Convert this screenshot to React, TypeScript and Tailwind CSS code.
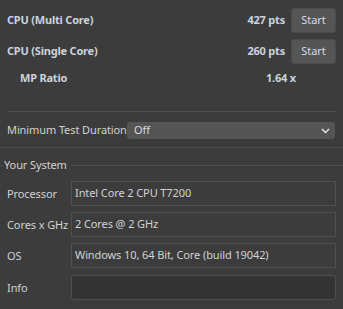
import React from "react";

const font = { fontFamily: '"Noto Sans", "Open Sans", sans-serif' };

function Field({ label, value, info }: { label: string; value?: string; info?: boolean }) {
  return (
    <div className="flex items-center h-[25px] pl-[7px] pr-[7px]">
      <div className="w-[64px] whitespace-nowrap text-[11px] text-[#d2d2d2] leading-none tracking-[-0.1px]">{label}</div>
      <div
        className={
          info
            ? "flex-1 h-[25px] rounded-[3px] border border-[#4e4e4e] bg-[#333333]"
            : "flex-1 h-[25px] border border-[#505050] flex items-center pl-[3px] whitespace-nowrap text-[11px] text-[#d2d2d2] tracking-[-0.1px]"
        }
      >
        {value}
      </div>
    </div>
  );
}

export default function App() {
  return (
    <div className="w-[343px] h-[309px] bg-[#3c3c3c] overflow-hidden" style={font}>
      <div className="pt-[8px]">
        <div className="flex items-center h-[25px] pl-[7px] pr-[7px]">
          <div className="flex-1 whitespace-nowrap text-[11px] font-bold text-[#cbd3dd] tracking-[-0.2px]">CPU (Multi Core)</div>
          <div className="whitespace-nowrap text-[11px] font-bold text-[#cbd3dd] tracking-[-0.2px]">427 pts</div>
          <button className="ml-[6px] w-[45px] h-[25px] rounded-[3px] bg-[#555555] border border-[#4b4b4b] text-[11px] text-[#d6dbe2]">
            Start
          </button>
        </div>
        <div className="flex items-center h-[25px] pl-[7px] pr-[7px] mt-[6px]">
          <div className="flex-1 whitespace-nowrap text-[11px] font-bold text-[#cbd3dd] tracking-[-0.2px]">CPU (Single Core)</div>
          <div className="whitespace-nowrap text-[11px] font-bold text-[#cbd3dd] tracking-[-0.2px]">260 pts</div>
          <button className="ml-[6px] w-[45px] h-[25px] rounded-[3px] bg-[#555555] border border-[#4b4b4b] text-[11px] text-[#d6dbe2]">
            Start
          </button>
        </div>
        <div className="flex items-center h-[20px] pl-[20px] pr-[47px] mt-[4px]">
          <div className="flex-1 whitespace-nowrap text-[11px] font-bold text-[#cbd3dd] tracking-[-0.2px]">MP Ratio</div>
          <div className="whitespace-nowrap text-[11px] font-bold text-[#cbd3dd] tracking-[-0.2px]">1.64 x</div>
        </div>
      </div>
      <div className="mx-[7px] mt-[23px] h-px bg-[#4f4f4f]" />
      <div className="flex items-center h-[17px] mt-[10px] pl-[7px] pr-[8px]">
        <div className="w-[120px] whitespace-nowrap text-[11px] text-[#d2d2d2] tracking-[-0.1px]">Minimum Test Duration</div>
        <div className="flex-1 h-[17px] rounded-[3px] bg-[#555555] flex items-center pl-[7px] pr-[5px] text-[11px] text-[#d6dbe2]">
          <span className="flex-1">Off</span>
          <svg width="9" height="6" viewBox="0 0 9 6" fill="none">
            <path d="M1 1 L4.5 4.5 L8 1" stroke="#e6e6e6" strokeWidth="1.4" />
          </svg>
        </div>
      </div>
      <div className="mt-[8px] h-px bg-[#4f4f4f]" />
      <div className="flex items-center h-[16px] mt-[9px]">
        <div className="w-[3px] h-px bg-[#4f4f4f]" />
        <div className="px-[1px] whitespace-nowrap text-[11px] text-[#d2d2d2] tracking-[-0.1px]">Your System</div>
        <div className="flex-1 ml-[3px] h-px bg-[#4f4f4f]" />
      </div>
      <div className="mt-[8px] flex flex-col gap-[6px]">
        <Field label="Processor" value="Intel Core 2 CPU T7200" />
        <Field label="Cores x GHz" value="2 Cores @ 2 GHz" />
        <Field label="OS" value="Windows 10, 64 Bit, Core (build 19042)" />
        <div className="mt-[1px]">
          <Field label="Info" info />
        </div>
      </div>
    </div>
  );
}
